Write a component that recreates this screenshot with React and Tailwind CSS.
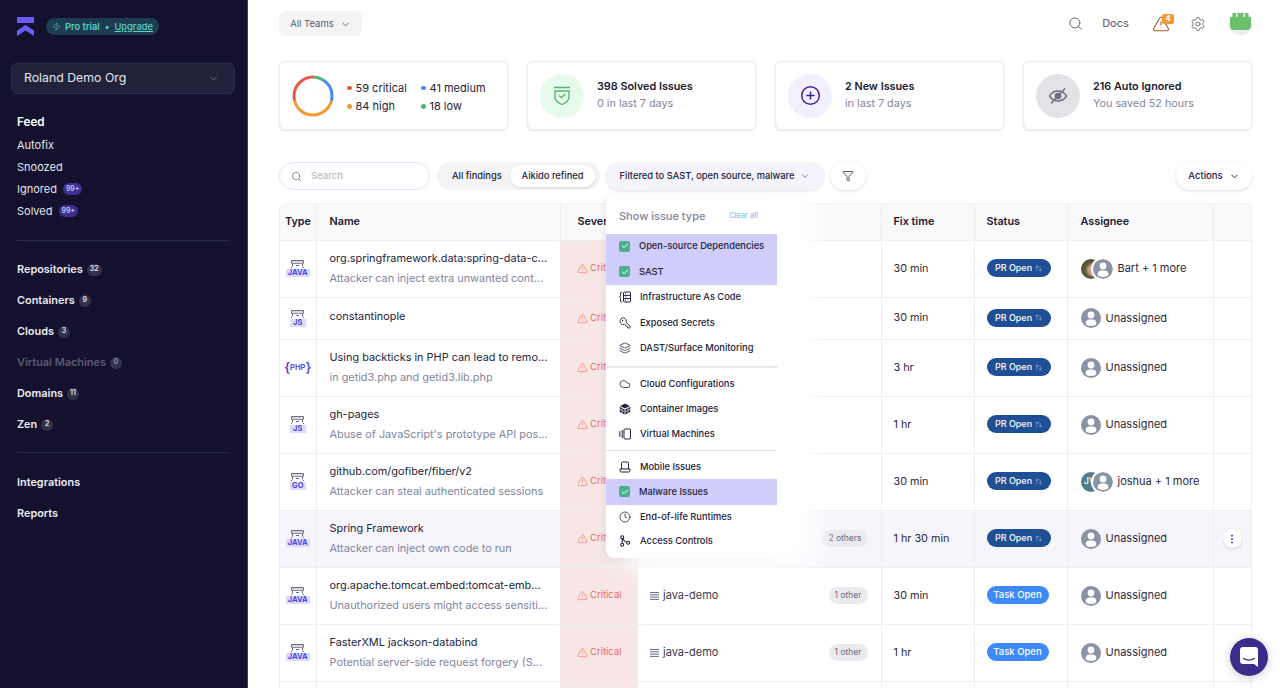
import {
  Check, ChevronDown, CirclePlus, Clock, Cloud, Funnel, GitPullRequest, KeyRound, Layers, MoreVertical, Search, Settings, TriangleAlert, Zap,
} from 'lucide-react'

const navTop = [
  { label: 'Autofix' },
  { label: 'Snoozed' },
  { label: 'Ignored', badge: '99+' },
  { label: 'Solved', badge: '99+' },
]

const navMid = [
  { label: 'Repositories', count: '32' },
  { label: 'Containers', count: '9' },
  { label: 'Clouds', count: '3' },
  { label: 'Virtual Machines', count: '0', dim: true },
  { label: 'Domains', count: '11' },
  { label: 'Zen', count: '2' },
]

const rows = [
  { lang: 'JAVA', name: 'org.springframework.data:spring-data-c...', desc: 'Attacker can inject extra unwanted cont...', time: '30 min', status: 'pr', who: 'Bart + 1 more', avatar: 'photo', h: 'h-[57px]' },
  { lang: 'JS', name: 'constantinople', time: '30 min', status: 'pr', who: 'Unassigned', h: 'h-[42px]' },
  { lang: 'PHP', name: 'Using backticks in PHP can lead to remo...', desc: 'in getid3.php and getid3.lib.php', time: '3 hr', status: 'pr', who: 'Unassigned', h: 'h-[57px]' },
  { lang: 'JS', name: 'gh-pages', desc: "Abuse of JavaScript's prototype API pos...", time: '1 hr', status: 'pr', who: 'Unassigned', h: 'h-[57px]' },
  { lang: 'GO', name: 'github.com/gofiber/fiber/v2', desc: 'Attacker can steal authenticated sessions', time: '30 min', status: 'pr', who: 'joshua + 1 more', avatar: 'jv', h: 'h-[57px]' },
  { lang: 'JAVA', name: 'Spring Framework', desc: 'Attacker can inject own code to run', others: '2 others', time: '1 hr 30 min', status: 'pr', who: 'Unassigned', active: true, h: 'h-[57px]' },
  { lang: 'JAVA', name: 'org.apache.tomcat.embed:tomcat-emb...', desc: 'Unauthorized users might access sensiti...', repo: 'java-demo', others: '1 other', time: '30 min', status: 'task', who: 'Unassigned', h: 'h-[57px]' },
  { lang: 'JAVA', name: 'FasterXML jackson-databind', desc: 'Potential server-side request forgery (S...', repo: 'java-demo', others: '1 other', time: '1 hr', status: 'task', who: 'Unassigned', h: 'h-[57px]' },
]

function IacIcon() {
  return (
    <svg width="12" height="12" viewBox="0 0 12 12" fill="none" stroke="#22223a" strokeWidth="1">
      <path d="M3 1H2.400C1.800 1 1.600 1.400 1.600 2v2.400C1.600 5.200 1 6 .5 6c.5 0 1.100.8 1.100 1.600V10c0 .6.2 1 .8 1H3" />
      <rect x="4.500" y="1" width="7" height="10" rx="1" />
      <path d="M4.500 4.400h7M4.500 7.600h7M6.300 2.700h1M6.300 6h1M6.300 9.300h1" />
    </svg>
  )
}

function ContainerIcon() {
  return (
    <svg width="12" height="12" viewBox="0 0 12 12" fill="#22223a">
      <path d="M6 .5 10.800 3 6 5.600 1.200 3z" />
      <path d="M.8 3.800 5.600 6.400v5L.8 8.900zM11.200 3.800 6.400 6.400v5l4.800-2.500z" />
      <path d="M3 4.600v5.400M9 4.600v5.400M.8 6.200l4.800 2.600M11.200 6.200 6.400 8.800" stroke="#fff" strokeWidth=".6" />
    </svg>
  )
}

function VmIcon() {
  return (
    <svg width="12" height="12" viewBox="0 0 12 12" fill="none" stroke="#22223a" strokeWidth="1">
      <rect x="5" y="1" width="6.500" height="10" rx="1" />
      <path d="M3.200 2v8M.8 3.200v5.600" />
    </svg>
  )
}

function MobileIcon() {
  return (
    <svg width="12" height="12" viewBox="0 0 12 12" fill="none" stroke="#22223a" strokeWidth="1">
      <path d="M2.500 8V2.200C2.500 1.400 3 1 3.700 1h4.600c.7 0 1.200.4 1.200 1.200V8" />
      <path d="M1 8h10v1.600c0 .8-.5 1.400-1.300 1.400H2.300C1.500 11 1 10.400 1 9.600z" />
    </svg>
  )
}

function AccessIcon() {
  return (
    <svg width="12" height="12" viewBox="0 0 12 12" fill="none" stroke="#22223a" strokeWidth="1.100">
      <circle cx="3.200" cy="2.200" r="1.500" />
      <circle cx="3.200" cy="9.800" r="1.500" />
      <circle cx="9.200" cy="7.800" r="1.500" />
      <path d="M3.200 3.700v4.600M4 3.500c.6 2.200 2 3.400 3.700 4" />
    </svg>
  )
}

const issueGroups = [
  {
    className: '',
    items: [
      { label: 'Open-source Dependencies', checked: true, h: 'h-[25.5px] pb-[1px]' },
      { label: 'SAST', checked: true, h: 'h-[25.5px] pb-[1px]' },
      { label: 'Infrastructure As Code', icon: <IacIcon />, h: 'h-[25.5px] pb-[1px]' },
      { label: 'Exposed Secrets', icon: <KeyRound size={12} strokeWidth={1.800} className="-scale-x-100 text-[#22223a]" />, h: 'h-[25.5px]' },
      { label: 'DAST/Surface Monitoring', icon: <Layers size={12} strokeWidth={1.500} className="text-[#22223a]" />, h: 'h-[25.5px] pb-[1px]' },
    ],
  },
  {
    className: 'mt-[4px] border-t-2 border-[#e9e8f1] pt-[3px]',
    items: [
      { label: 'Cloud Configurations', icon: <Cloud size={12} strokeWidth={1.500} className="text-[#22223a]" />, h: 'h-[26px]' },
      { label: 'Container Images', icon: <ContainerIcon />, h: 'h-[25px]' },
      { label: 'Virtual Machines', icon: <VmIcon />, h: 'h-[24px]' },
    ],
  },
  {
    className: 'mt-[4px] border-t border-[#e2e1ec] pt-[4px]',
    items: [
      { label: 'Mobile Issues', icon: <MobileIcon />, h: 'h-[24px]' },
      { label: 'Malware Issues', checked: true, h: 'h-[26px]' },
      { label: 'End-of-life Runtimes', icon: <Clock size={12} strokeWidth={1.500} className="text-[#22223a]" />, h: 'h-[24px]' },
      { label: 'Access Controls', icon: <AccessIcon />, h: 'h-[24px]' },
    ],
  },
]

function Logo() {
  return (
    <svg width="17" height="19" viewBox="0 0 17 19">
      <rect x="0" y="0" width="17" height="6" fill="#6a5cf6" />
      <path d="M0 13.500 8.500 8 17 13.500V19L8.500 13.600 0 19z" fill="#6a5cf6" />
    </svg>
  )
}

function Donut() {
  const c = 2 * Math.PI * 19
  const segments = [
    { color: '#4fb56f', part: 0.09, start: 0 },
    { color: '#3f8cf5', part: 0.2, start: 0.09 },
    { color: '#f39a2e', part: 0.416, start: 0.29 },
    { color: '#ea5748', part: 0.294, start: 0.706 },
  ]
  return (
    <svg width="42" height="42" viewBox="0 0 42 42" className="shrink-0 -rotate-90">
      {segments.map((s) => (
        <circle
          key={s.color}
          cx="21"
          cy="21"
          r="19"
          fill="none"
          stroke={s.color}
          strokeWidth="3"
          strokeDasharray={`${s.part * c} ${c}`}
          strokeDashoffset={-s.start * c}
        />
      ))}
    </svg>
  )
}

function StatCard({ circle, icon, title, sub }) {
  return (
    <div className="flex h-[69px] items-center gap-[13px] rounded-md border border-[#ecebf0] bg-white pl-[12px] shadow-[0_1px_3px_rgba(20,20,50,0.1)]">
      <div className={`flex h-[44px] w-[44px] shrink-0 items-center justify-center rounded-full ${circle}`}>{icon}</div>
      <div className="pb-[2px]">
        <div className="text-[10.800px] font-semibold leading-[17px] text-[#1b1a33]">{title}</div>
        <div className="text-[10.800px] leading-[17px] text-[#7f86a0]">{sub}</div>
      </div>
    </div>
  )
}

function Legend({ color, text }) {
  return (
    <div className="flex items-center gap-[4px] whitespace-nowrap text-[11px] leading-[18.500px] text-[#26253d]">
      <span className={`h-[4.500px] w-[4.500px] rounded-full ${color}`} />
      {text}
    </div>
  )
}

function LangIcon({ lang }) {
  if (lang === 'PHP') {
    return (
      <div className="flex items-center justify-center text-[#4c46c9]">
        <span className="text-[13px] font-semibold leading-none">{'{'}</span>
        <span className="text-[7.500px] font-bold leading-none text-[#5a50f0]">PHP</span>
        <span className="text-[13px] font-semibold leading-none">{'}'}</span>
      </div>
    )
  }
  return (
    <div className="flex flex-col items-center">
      <svg width="15" height="9" viewBox="0 0 15 9" fill="none" stroke="#6c6a80" strokeWidth="1.100">
        <rect x="1.500" y=".6" width="12" height="2.600" rx=".8" />
        <path d="M2.500 3.400v3M12.500 3.400v3M6 5.500h3" />
        <path d="M1 7.500h1M14 7.500h-1" />
      </svg>
      <span className={`bg-[#dedcfb] px-[2px] text-[7.500px] font-bold leading-[8px] text-[#5147e6] ${lang === 'JAVA' ? '' : 'min-w-[16px] text-center'}`}>
        {lang}
      </span>
    </div>
  )
}

function EmptyUser({ ring }) {
  return (
    <span className={`relative flex h-[20px] w-[20px] shrink-0 items-end justify-center overflow-hidden rounded-full bg-[#8a92a6] ${ring ? 'outline-2 outline-white' : ''}`}>
      <svg width="20" height="20" viewBox="0 0 20 20" fill="#fff">
        <circle cx="10" cy="7" r="3.400" />
        <path d="M4.600 15c0-2.300 1.800-3.600 3.400-3.600h4c1.600 0 3.400 1.300 3.400 3.600 0 1.800-2 3-5.400 3S4.600 16.800 4.600 15z" />
      </svg>
    </span>
  )
}

function Assignee({ avatar }) {
  if (avatar === 'photo') {
    return (
      <span className="flex shrink-0">
        <span className="h-[20px] w-[20px] shrink-0 rounded-full bg-[radial-gradient(circle_at_60%_55%,#c8a184_0_28%,#5d5a3c_48%,#4a4431_100%)]" />
        <span className="-ml-[8px]"><EmptyUser ring /></span>
      </span>
    )
  }
  if (avatar === 'jv') {
    return (
      <span className="flex shrink-0">
        <span className="flex h-[20px] w-[20px] shrink-0 items-center justify-center rounded-full bg-[#4f7d87] pr-[2px] text-[8.500px] font-medium text-white">JV</span>
        <span className="-ml-[8px]"><EmptyUser ring /></span>
      </span>
    )
  }
  return <EmptyUser />
}

function StatusPill({ status }) {
  if (status === 'task') {
    return <span className="inline-flex h-[18px] w-[62px] items-center justify-center rounded-full bg-[#3d8bfa] text-[9.500px] font-medium text-white">Task Open</span>
  }
  return (
    <span className="inline-flex h-[18px] w-[64px] items-center justify-center gap-[3px] rounded-full bg-[#1f4f95] text-[9px] font-medium text-white">
      PR Open
      <GitPullRequest size={7} strokeWidth={1.500} className="text-[#b7c6e0]" />
    </span>
  )
}

function IssueMenu() {
  return (
    <div className="absolute left-[327px] top-[32px] z-10 w-[171px] rounded-lg bg-white pb-[5px] shadow-[28px_0_24px_12px_rgba(255,255,255,0.96),0_2px_8px_rgba(30,30,70,0.1)]">
      <div className="flex h-[40px] items-center justify-between pl-[13px] pr-[19px] pt-[4px]">
        <span className="text-[11px] font-medium text-[#7f86a0]">Show issue type</span>
        <span className="text-[7.500px] font-medium text-[#8ec0f2]">Clear all</span>
      </div>
      {issueGroups.map((group) => (
        <div key={group.items[0].label} className={group.className}>
          {group.items.map((item) => (
            <div key={item.label} className={`flex items-center gap-[9px] pl-[13px] text-[9.300px] font-medium text-[#22223a] ${item.h} ${item.checked ? 'bg-[#d0cdfa]' : ''}`}>
              {item.checked ? (
                <span className="flex h-[11px] w-[11px] items-center justify-center rounded-[2px] bg-[#4bb08c]">
                  <Check size={8} strokeWidth={3} className="text-white" />
                </span>
              ) : (
                <span className="flex h-[12px] w-[12px] items-center justify-center">{item.icon}</span>
              )}
              {item.label}
            </div>
          ))}
        </div>
      ))}
    </div>
  )
}

function IssueRow({ row }) {
  const bg = row.active ? 'bg-[#f6f5fc]' : 'bg-white'
  return (
    <tr className={`${row.h} border-t border-[#eeeef3]`}>
      <td className={`${bg} border-r border-[#eeeef3] p-0`}>
        <div className="flex justify-center"><LangIcon lang={row.lang} /></div>
      </td>
      <td className={`${bg} px-[13px]`}>
        <div className={`whitespace-nowrap text-[10.900px] leading-[19.500px] text-[#26253d] ${row.desc ? '' : 'pb-[2px]'}`}>{row.name}</div>
        {row.desc && <div className="whitespace-nowrap text-[10.900px] leading-[19.500px] text-[#7f86a0]">{row.desc}</div>}
      </td>
      <td className="bg-[#f6e7e6] pl-[17px]">
        <div className="flex items-center gap-[2px] text-[9.500px] text-[#f0685c]">
          <TriangleAlert size={11} strokeWidth={1.300} />
          Critical
        </div>
      </td>
      <td className={`${bg} pl-[12px] pr-[13px]`}>
        <div className="flex items-center justify-between">
          {row.repo ? (
            <span className="flex items-center gap-[3px] text-[11px] text-[#3a3a4f]">
              <svg width="10" height="10" viewBox="0 0 10 10" stroke="#6c6a80" strokeWidth="1">
                <path d="M0 1.500h9M0 3.800h9M0 6.100h9M0 8.400h9" />
              </svg>
              {row.repo}
            </span>
          ) : (
            <span />
          )}
          {row.others && (
            <span className="flex h-[17px] items-center rounded-full bg-[#ebebef] px-[6px] text-[8.500px] text-[#6b6b7e]">{row.others}</span>
          )}
        </div>
      </td>
      <td className={`${bg} border-l border-[#eeeef3] pl-[12px] pt-[1px] text-[10.800px] text-[#2c2b42]`}>{row.time}</td>
      <td className={`${bg} border-l border-[#eeeef3] pb-[1px] pl-[12px]`}>
        <div className="flex"><StatusPill status={row.status} /></div>
      </td>
      <td className={`${bg} border-l border-[#eeeef3] pl-[13px]`}>
        <div className="flex items-center gap-[5px] whitespace-nowrap text-[11px] text-[#2c2b42]">
          <Assignee avatar={row.avatar} />
          {row.who}
        </div>
      </td>
      <td className={`${bg} border-l border-[#eeeef3]`}>
        {row.active && (
          <div className="flex justify-center">
            <span className="flex h-[19px] w-[19px] items-center justify-center rounded-full bg-white shadow-[0_1px_3px_rgba(20,20,50,0.15)]">
              <MoreVertical size={12} strokeWidth={2.200} className="text-[#5b4be8]" />
            </span>
          </div>
        )}
      </td>
    </tr>
  )
}

export default function App() {
  return (
    <div className="flex h-screen overflow-hidden bg-white font-['Inter',sans-serif]">
      <aside className="h-screen w-[248px] shrink-0 border-r border-[#3a3950] bg-[#13112e] text-white">
        <div className="flex items-center gap-[12px] pl-[17px] pt-[17px]">
          <Logo />
          <div className="flex h-[17px] items-center gap-[3px] rounded-full bg-[#1d3c52] pl-[6px] pr-[6px] text-[9.300px] font-semibold text-[#57d3c8]">
            <Zap size={9} strokeWidth={1.500} />
            <span className="ml-[1px]">Pro trial</span>
            <span className="mx-[2px]">•</span>
            <span className="font-medium underline">Upgrade</span>
          </div>
        </div>
        <div className="ml-[11px] mt-[27px] flex h-[31px] w-[224px] items-center justify-between rounded-md border border-[#2e2d47] bg-[#22213a] pl-[12px] pr-[15px] text-[12.300px] text-[#e6e6ec]">
          Roland Demo Org
          <ChevronDown size={11} className="text-[#7b7b90]" />
        </div>
        <div className="pl-[17px] pr-[18px]">
          <div className="mt-[19px] text-[11.700px] font-semibold leading-[18px] text-white">Feed</div>
          <div className="mt-[3px]">
            {navTop.map((n) => (
              <div key={n.label} className="flex h-[22px] items-center gap-[6px] text-[11px] text-[#e6e6ec]">
                {n.label}
                {n.badge && (
                  <span className="flex h-[12px] items-center rounded-full bg-[#3d2f8f] px-[3px] text-[7px] font-medium text-[#d8d5f5]">{n.badge}</span>
                )}
              </div>
            ))}
          </div>
          <div className="mt-[18px] h-[1px] bg-[#2b2a45]" />
          <div className="mt-[13px]">
            {navMid.map((n) => (
              <div key={n.label} className={`flex h-[31px] items-center gap-[4px] text-[10.900px] font-semibold ${n.dim ? 'text-[#5c5b72]' : 'text-[#ecebf2]'}`}>
                {n.label}
                <span className={`flex h-[12px] min-w-[12px] items-center justify-center rounded-full bg-[#33324a] px-[3px] text-[7px] ${n.dim ? 'text-[#9a99ab]' : 'text-[#e6e6ec]'}`}>{n.count}</span>
              </div>
            ))}
          </div>
          <div className="mt-[12px] h-[1px] bg-[#2b2a45]" />
          <div className="mt-[14px]">
            <div className="flex h-[31px] items-center text-[10.900px] font-semibold text-[#ecebf2]">Integrations</div>
            <div className="flex h-[31px] items-center text-[10.900px] font-semibold text-[#ecebf2]">Reports</div>
          </div>
        </div>
      </aside>

      <main className="h-screen min-w-0 flex-1 overflow-hidden pl-[31px] pr-[28px]">
        <header className="flex items-start justify-between pt-[11px]">
          <div className="flex h-[25px] w-[83px] items-center justify-center gap-[6px] rounded-md bg-[#f4f4f5] pt-[1px] text-[9.500px] text-[#5c5c6e]">
            All Teams
            <ChevronDown size={11} className="text-[#5c5c6e]" />
          </div>
          <div className="flex h-[25px] items-center">
            <Search size={15} strokeWidth={1.500} className="text-[#5f5f70]" />
            <span className="ml-[19px] text-[11px] font-medium text-[#6d6d80]">Docs</span>
            <span className="relative ml-[23px] flex h-[18px] w-[22px] items-center">
              <TriangleAlert size={18} strokeWidth={1.500} className="text-[#a5622a]" />
              <span className="absolute -top-[1px] left-[10px] flex h-[10px] w-[12px] items-center justify-center rounded-[2px] bg-[#f39a2e] text-[7.500px] font-bold text-white">4</span>
            </span>
            <Settings size={16} strokeWidth={1.300} className="ml-[16px] text-[#5f5f70]" />
            <span className="ml-[23px] flex h-[23px] w-[23px] items-start justify-center rounded-full bg-[#eeeeee]">
              <svg width="21" height="17" viewBox="0 0 21 17" fill="#6cc06b" className="mt-[1px]">
                <path d="M0 4h2.500V0H6v4h1.500V0h6v4H15V0h3.500v4H21v9q0 4-4 4H4q-4 0-4-4z" />
              </svg>
            </span>
          </div>
        </header>

        <section className="mt-[25px] grid grid-cols-4 gap-[19px]">
          <div className="flex h-[69px] items-center gap-[13px] rounded-md border border-[#ecebf0] bg-white pl-[12px] shadow-[0_1px_3px_rgba(20,20,50,0.1)]">
            <Donut />
            <div className="grid grid-cols-[74px_auto] pt-[3px]">
              <Legend color="bg-[#ea5748]" text="59 critical" />
              <Legend color="bg-[#3f8cf5]" text="41 medium" />
              <Legend color="bg-[#f39a2e]" text="84 high" />
              <Legend color="bg-[#4fb56f]" text="18 low" />
            </div>
          </div>
          <StatCard
            circle="bg-[#e6fbec]"
            title="398 Solved Issues"
            sub="0 in last 7 days"
            icon={
              <svg width="18" height="20" viewBox="0 0 18 20" fill="none" stroke="#4fb56f" strokeWidth="1.300">
                <path d="M1 1.500h16M2 5h14v6c0 3.400-3.400 6-7 7.500C5.400 17 2 14.400 2 11z" />
                <path d="m6 9.500 2.300 2.200L12.300 8" />
              </svg>
            }
          />
          <StatCard circle="bg-[#f1f0fc]" title="2 New Issues" sub="in last 7 days" icon={<CirclePlus size={21} strokeWidth={1.700} className="text-[#4a1d9e]" />} />
          <StatCard
            circle="bg-[#e3e3e7]"
            title="216 Auto Ignored"
            sub="You saved 52 hours"
            icon={
              <svg width="20" height="20" viewBox="0 0 20 20" fill="none" stroke="#6f6f80" strokeWidth="1.500">
                <path d="M1.500 10C3.500 6.800 6.500 5 10 5s6.500 1.800 8.500 5c-2 3.200-5 5-8.500 5s-6.500-1.800-8.500-5z" />
                <circle cx="10" cy="10" r="2.600" fill="#6f6f80" />
                <path d="M17 2.500 3 17.500" />
              </svg>
            }
          />
        </section>

        <div className="relative mt-[32px]">
          <div className="relative z-20 flex h-[28px] items-center">
            <div className="flex h-[28px] w-[151px] items-center gap-[8px] rounded-full border border-[#e7e5fa] bg-white pl-[11px] text-[9.500px] font-medium text-[#bcbcc8]">
              <Search size={11} strokeWidth={1.500} className="text-[#5f5f70]" />
              <span className="ml-[1px]">Search</span>
            </div>
            <div className="ml-[7px] flex h-[28px] w-[163px] items-center rounded-full bg-[#f4f4f5] pl-[15px] pr-[5px] text-[9.300px] font-medium text-[#22223a]">
              All findings
              <span className="ml-[auto] flex h-[22px] w-[85px] items-center justify-center rounded-full bg-white shadow-[0_1px_3px_rgba(20,20,50,0.12)]">Aikido refined</span>
            </div>
            <div className="ml-[6px] flex h-[28px] w-[218px] items-center justify-center gap-[6px] rounded-full bg-[#f5f4fd] text-[9.300px] font-medium text-[#22223a] shadow-[0_1px_3px_rgba(20,20,50,0.12)]">
              Filtered to SAST, open source, malware
              <ChevronDown size={10} className="text-[#6a5cf6]" />
            </div>
            <div className="ml-[6px] flex h-[28px] w-[36px] items-center justify-center rounded-full bg-white shadow-[0_1px_3px_rgba(20,20,50,0.15)]">
              <Funnel size={12} strokeWidth={1.500} className="text-[#22223a]" />
            </div>
            <div className="ml-auto flex h-[28px] w-[76px] items-center justify-center gap-[6px] rounded-full bg-white text-[9.500px] font-medium text-[#22223a] shadow-[0_1px_3px_rgba(20,20,50,0.15)]">
              Actions
              <ChevronDown size={11} className="text-[#22223a]" />
            </div>
          </div>

          <IssueMenu />

          <div className="mt-[13px] overflow-hidden rounded-t-lg border border-[#f0f0f4]">
            <table className="w-full table-fixed border-collapse">
              <colgroup>
                <col className="w-[36px]" />
                <col className="w-[244px]" />
                <col className="w-[78px]" />
                <col className="w-[243px]" />
                <col className="w-[93px]" />
                <col className="w-[93px]" />
                <col className="w-[146px]" />
                <col />
              </colgroup>
              <thead>
                <tr className="h-[36px] bg-[#f9f9fa] text-left text-[10.800px] font-semibold text-[#1b1a33]">
                  <th className="whitespace-nowrap border-r border-[#eeeef3] pl-[5px] pt-[1px] font-semibold">Type</th>
                  <th className="border-r border-[#eeeef3] pl-[13px] pt-[1px] font-semibold">Name</th>
                  <th className="pl-[17px] pt-[1px] font-semibold">Severity</th>
                  <th />
                  <th className="border-l border-[#eeeef3] pl-[12px] pt-[1px] font-semibold">Fix time</th>
                  <th className="border-l border-[#eeeef3] pl-[12px] pt-[1px] font-semibold">Status</th>
                  <th className="border-l border-[#eeeef3] pl-[13px] pt-[1px] font-semibold">Assignee</th>
                  <th className="border-l border-[#eeeef3]" />
                </tr>
              </thead>
              <tbody>
                {rows.map((row) => (
                  <IssueRow key={row.name} row={row} />
                ))}
                <tr className="h-[57px] border-t border-[#eeeef3]">
                  <td className="border-r border-[#eeeef3]" />
                  <td />
                  <td className="bg-[#f6e7e6]" />
                  <td />
                  <td className="border-l border-[#eeeef3]" />
                  <td className="border-l border-[#eeeef3]" />
                  <td className="border-l border-[#eeeef3]" />
                  <td className="border-l border-[#eeeef3]" />
                </tr>
              </tbody>
            </table>
          </div>
        </div>
      </main>

      <div className="absolute left-[1230px] top-[638px] z-30 flex h-[38px] w-[38px] items-center justify-center rounded-full bg-[#3a2d8c] shadow-[0_2px_10px_rgba(20,20,50,0.2)]">
        <svg width="18" height="20" viewBox="0 0 18 20">
          <path d="M3 0h12a3 3 0 0 1 3 3v17l-4-3H3a3 3 0 0 1-3-3V3a3 3 0 0 1 3-3z" fill="#fff" />
          <path d="M3.500 11.500c3.500 2 7.500 2 11 0" fill="none" stroke="#3a2d8c" strokeWidth="1.200" strokeLinecap="round" />
        </svg>
      </div>
    </div>
  )
}
